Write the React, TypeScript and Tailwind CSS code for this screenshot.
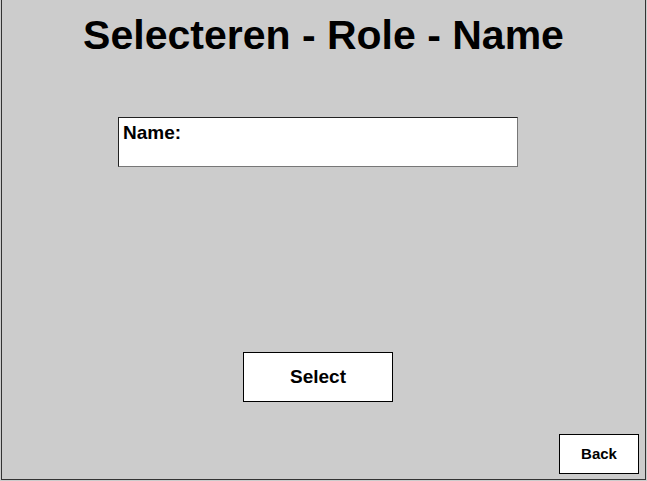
import React from 'react';

const font = { fontFamily: '"Liberation Sans", Arial, sans-serif' };

export default function App() {
  return (
    <div className="w-[647px] h-[481px] bg-[#cccccc] pl-px pr-px pb-px" style={font}>
      <div className="h-full flex flex-col border-l border-r border-b border-[#333333]">
        {/* title */}
        <h1 className="pt-[15px] text-center text-[41px] leading-none font-bold text-black">
          Selecteren - Role - Name
        </h1>

        {/* name field */}
        <div className="mt-[61px] ml-[116px] w-[400px] h-[50px] bg-white border border-t-[#222222] border-l-[#222222] border-r-[#777777] border-b-[#777777] pl-[4px] pt-[4px]">
          <span className="text-[19px] leading-none font-bold text-black">Name:</span>
        </div>

        {/* select */}
        <button className="mt-[185px] ml-[241px] w-[150px] h-[50px] bg-white border border-black flex items-center justify-center pb-[2px] text-[19px] leading-none font-bold text-black">
          Select
        </button>

        {/* back */}
        <button className="mt-[32px] ml-auto mr-[6px] w-[80px] h-[40px] bg-white border border-black flex items-center justify-center pb-[2px] text-[15px] leading-none font-bold text-black">
          Back
        </button>
      </div>
    </div>
  );
}
